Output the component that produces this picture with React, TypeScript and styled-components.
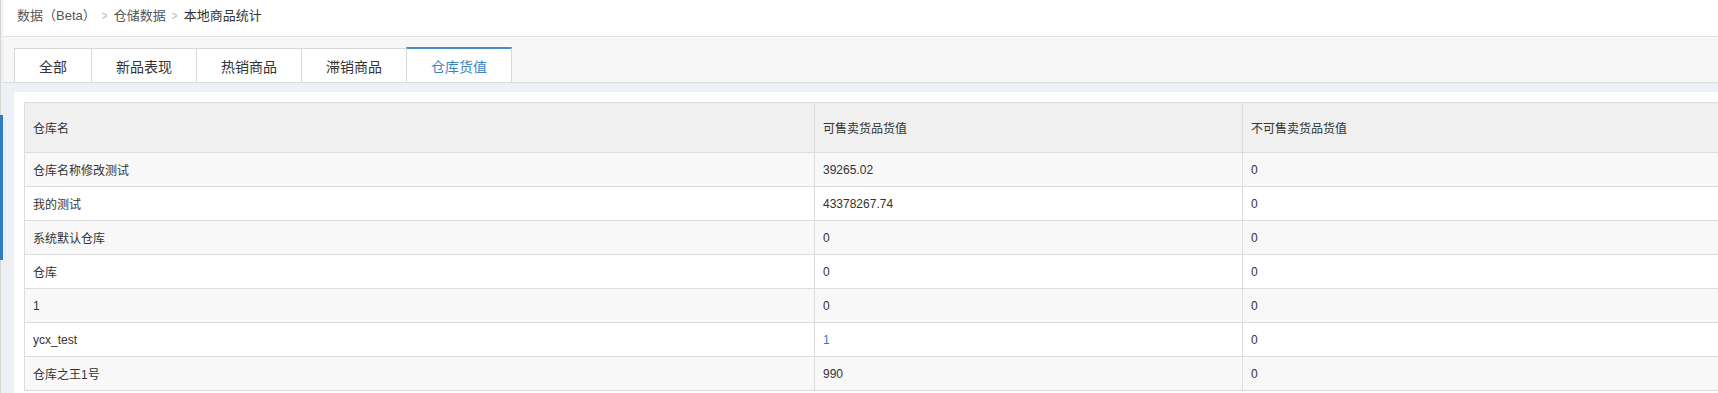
import React from "react";
import styled, { createGlobalStyle } from "styled-components";

const GlobalStyle = createGlobalStyle`
  html, body { margin: 0; padding: 0; background: #ffffff; overflow: hidden; }
  body {
    width: 1718px;
    height: 393px;
    font-family: "Liberation Sans", "Noto Sans CJK SC", Arial, sans-serif;
    color: #333;
  }
  * { box-sizing: border-box; }
`;

const Page = styled.div`
  display: flex;
  width: 1718px;
  height: 393px;
  overflow: hidden;
`;

const Rail = styled.div`
  flex: 0 0 2px;
  display: flex;
  flex-direction: column;
  border-left: 1px solid #d6d6d6;
  background: #f0f0f0;
`;

const RailThumb = styled.div`
  margin-top: 115px;
  margin-left: -1px;
  width: 3px;
  height: 145px;
  background: #2f7cc4;
`;

const Main = styled.div`
  flex: 1;
  min-width: 0;
  display: flex;
  flex-direction: column;
  background: #edf1f5;
`;

const Breadcrumb = styled.div`
  height: 37px;
  display: flex;
  align-items: center;
  padding: 0 0 4px 14px;
  background: #fff;
  border-bottom: 1px solid #e2e2e2;
  font-size: 13px;
`;

const Crumb = styled.span<{ $current?: boolean }>`
  color: ${(p) => (p.$current ? "#333" : "#555")};
  line-height: 16px;
`;

const Sep = styled.span`
  color: #b5b5b5;
  font-size: 12px;
  padding: 0 6px 0 5px;
  transform: scaleX(0.8);
  line-height: 16px;
`;

const TabBar = styled.div`
  height: 46px;
  display: flex;
  align-items: flex-end;
  padding-left: 11px;
  background: #f7f7f7;
  border-bottom: 1px solid #dcdcdc;
`;

const Tab = styled.div<{ $active?: boolean }>`
  height: ${(p) => (p.$active ? "35px" : "34px")};
  padding: 0 24px;
  display: flex;
  align-items: center;
  justify-content: center;
  background: #fff;
  border: 1px solid #d8d8d8;
  border-top: ${(p) => (p.$active ? "2px solid #4b8cc4" : "1px solid #d8d8d8")};
  border-bottom: none;
  margin-left: -1px;
  font-size: 14px;
  color: ${(p) => (p.$active ? "#3d85bf" : "#333")};
  cursor: pointer;
  &:first-child { margin-left: 0; }
  & > span { margin-top: ${(p) => (p.$active ? "0" : "1px")}; }
`;

const Content = styled.div`
  flex: 1;
  padding: 9px 0 0 11px;
  min-height: 0;
`;

const Panel = styled.div`
  height: 100%;
  background: #fff;
  padding: 10px 0 0 10px;
  overflow: hidden;
`;

const Table = styled.table`
  width: 1980px;
  border-collapse: collapse;
  table-layout: fixed;
  font-size: 12px;
`;

const HeadCell = styled.th`
  height: 50px;
  padding: 0 8px;
  text-align: left;
  font-weight: normal;
  color: #333;
  background: #f0f0f0;
  border: 1px solid #dcdcdc;
`;

const Row = styled.tr<{ $striped?: boolean }>`
  background: ${(p) => (p.$striped ? "#f8f8f8" : "#fff")};
`;

const Cell = styled.td`
  height: 34px;
  padding: 0 8px;
  color: #333;
  border: 1px solid #dcdcdc;
  white-space: nowrap;
`;

const Link = styled.a`
  color: #2f7cc4;
  text-decoration: none;
  cursor: pointer;
`;

type RowData = { name: string; sale: string; unsale: string; link?: boolean };

const rows: RowData[] = [
  { name: "仓库名称修改测试", sale: "39265.02", unsale: "0" },
  { name: "我的测试", sale: "43378267.74", unsale: "0" },
  { name: "系统默认仓库", sale: "0", unsale: "0" },
  { name: "仓库", sale: "0", unsale: "0" },
  { name: "1", sale: "0", unsale: "0" },
  { name: "ycx_test", sale: "1", unsale: "0", link: true },
  { name: "仓库之王1号", sale: "990", unsale: "0" },
];

const tabs = ["全部", "新品表现", "热销商品", "滞销商品", "仓库货值"];

export default function App() {
  return (
    <>
      <GlobalStyle />
      <Page>
        <Rail>
          <RailThumb />
        </Rail>
        <Main>
          <Breadcrumb>
            <Crumb>数据（Beta）</Crumb>
            <Sep>&gt;</Sep>
            <Crumb>仓储数据</Crumb>
            <Sep>&gt;</Sep>
            <Crumb $current>本地商品统计</Crumb>
          </Breadcrumb>
          <TabBar>
            {tabs.map((t, i) => (
              <Tab key={t} $active={i === tabs.length - 1}>
                <span>{t}</span>
              </Tab>
            ))}
          </TabBar>
          <Content>
            <Panel>
              <Table>
                <colgroup>
                  <col style={{ width: 790 }} />
                  <col style={{ width: 428 }} />
                  <col />
                </colgroup>
                <thead>
                  <tr>
                    <HeadCell>仓库名</HeadCell>
                    <HeadCell>可售卖货品货值</HeadCell>
                    <HeadCell>不可售卖货品货值</HeadCell>
                  </tr>
                </thead>
                <tbody>
                  {rows.map((r, i) => (
                    <Row key={i} $striped={i % 2 === 0}>
                      <Cell>{r.name}</Cell>
                      <Cell>{r.link ? <Link>{r.sale}</Link> : r.sale}</Cell>
                      <Cell>{r.unsale}</Cell>
                    </Row>
                  ))}
                </tbody>
              </Table>
            </Panel>
          </Content>
        </Main>
      </Page>
    </>
  );
}
